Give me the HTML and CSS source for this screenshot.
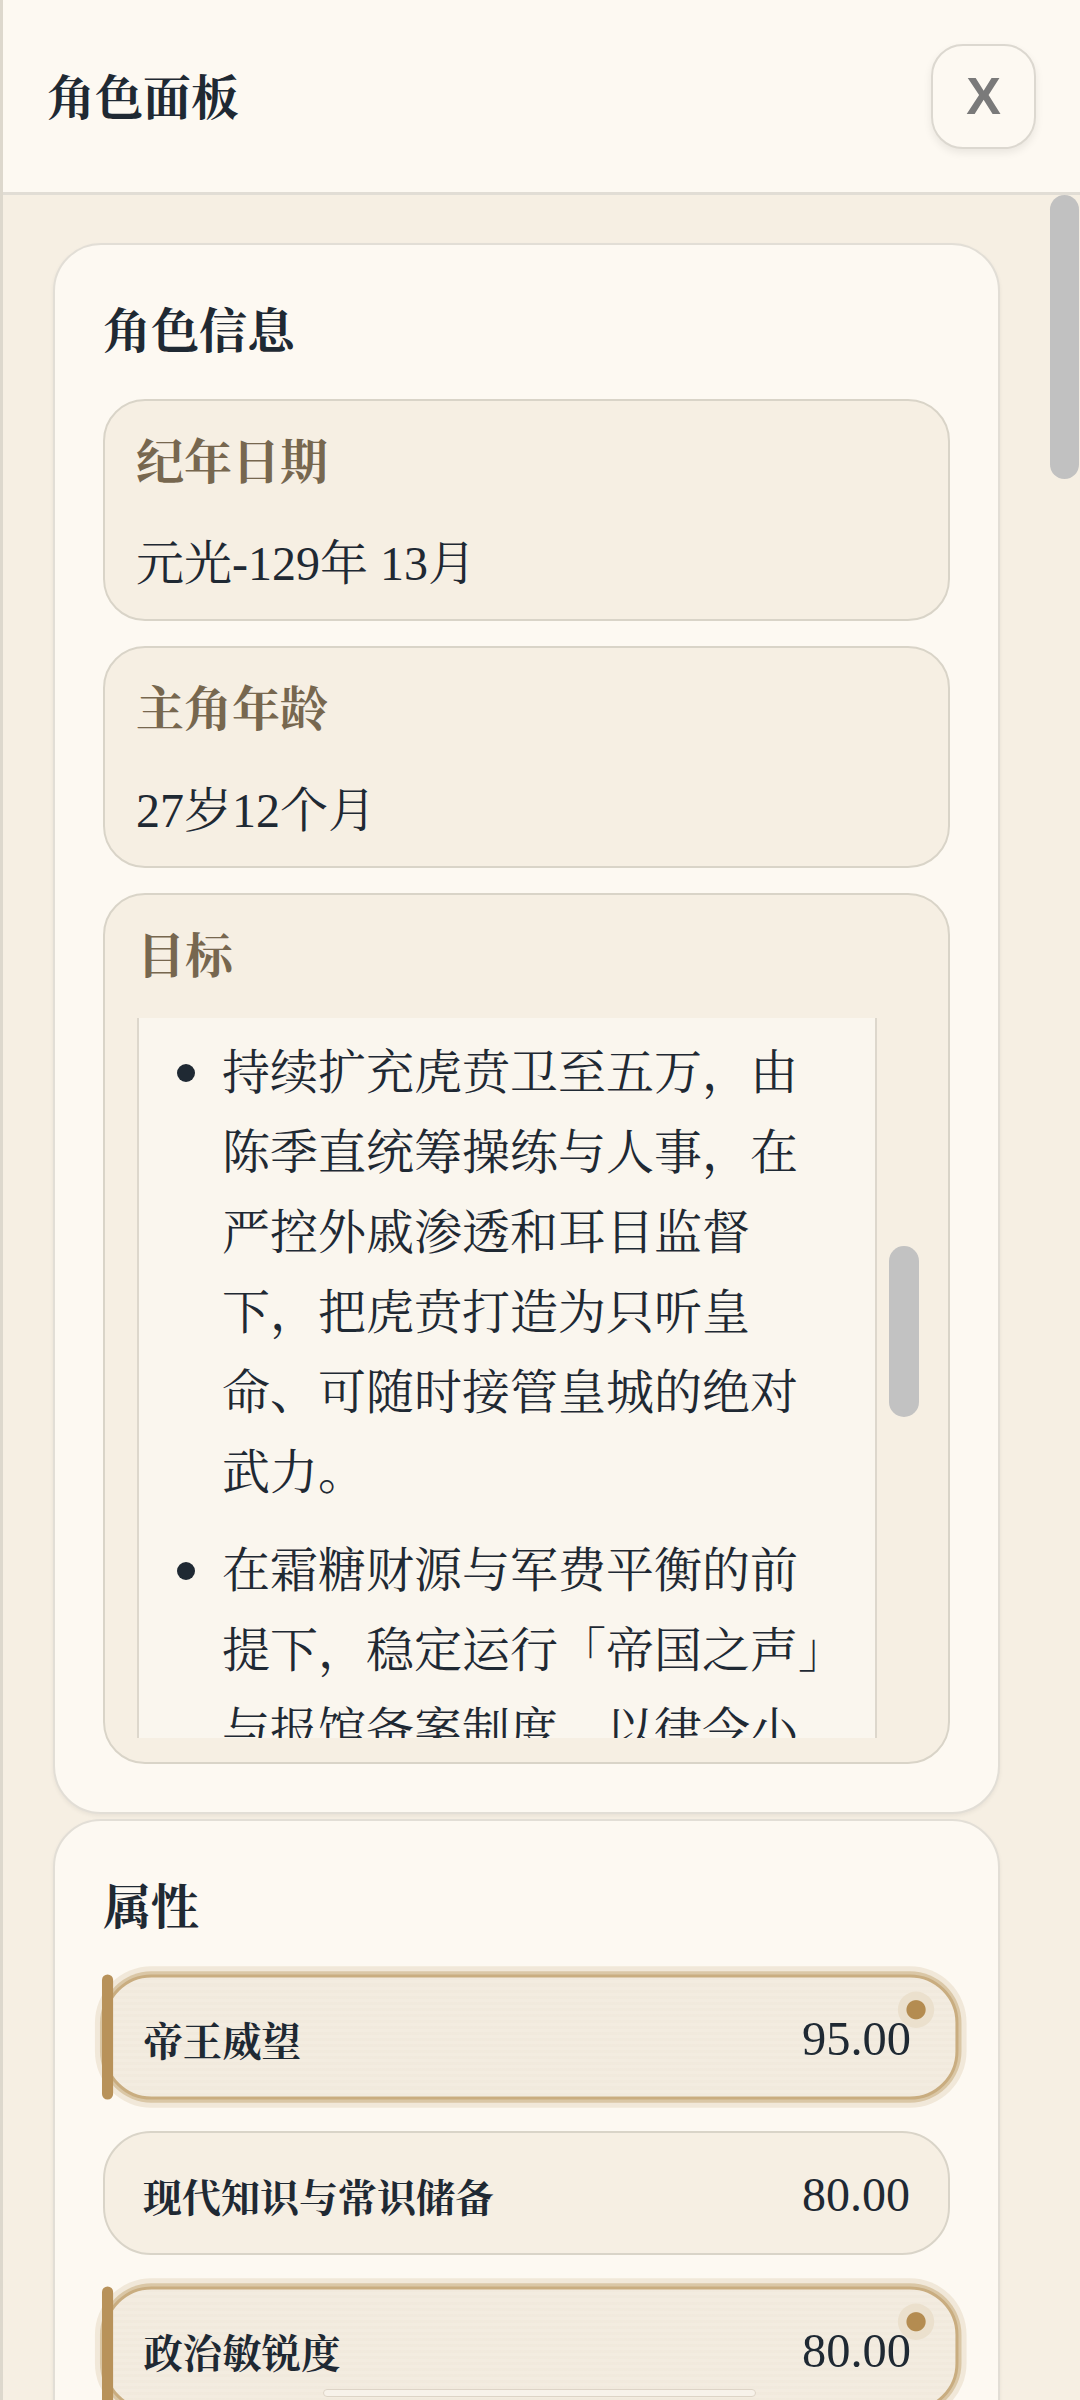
FILE: index.html
```html
<!DOCTYPE html>
<html lang="zh-CN">

<head>
    <meta charset="UTF-8">
    <meta name="viewport" content="width=device-width, initial-scale=1.0">
    <title>角色面板</title>
    <link rel="stylesheet" href="styles.css">
</head>

<body>
    <div class="panel">
        <!--标题栏-->
        <div class="panel-header">
            <h1 class="panel-title">角色面板</h1>
            <button type="button" class="close-btn">X</button>
        </div>
        <div class="panel-body">
            <div class="panel-scroll">
                <!--角色信息-->
                <div class="card">
                    <h2>角色信息</h2>
                    <div class="info-box">
                        <div class="info-label">纪年日期</div>
                        <div class="info-value">元光-129年 13月</div>
                    </div>
                    <div class="info-box">
                        <div class="info-label">主角年龄</div>
                        <div class="info-value">27岁12个月</div>
                    </div>
                    <div class="info-box goal-box">
                        <div class="info-label">目标</div>
                        <div class="goal-scroll">
                            <ul class="goal-list">
                                <li><span class="dot"></span><span>持续扩充虎贲卫至五万，由陈季直统筹操练与人事，在严控外戚渗透和耳目监督下，把虎贲打造为只听皇命、可随时接管皇城的绝对武力。</span></li>
                                <li><span class="dot"></span><span>在霜糖财源与军费平衡的前提下，稳定运行「帝国之声」与报馆备案制度，以律令小心收束舆论，使朝野议论尽在掌控之中。</span></li>
                            </ul>
                            <div class="goal-track">
                                <div class="goal-thumb"></div>
                            </div>
                        </div>
                    </div>
                </div>
                <!--属性-->
                <div class="card">
                    <h2>属性</h2>
                    <div class="attr-row active">
                        <span class="attr-name">帝王威望</span>
                        <span class="attr-value">95.00</span>
                    </div>
                    <div class="attr-row">
                        <span class="attr-name">现代知识与常识储备</span>
                        <span class="attr-value">80.00</span>
                    </div>
                    <div class="attr-row active">
                        <span class="attr-name">政治敏锐度</span>
                        <span class="attr-value">80.00</span>
                    </div>
                    <div class="attr-row">
                        <span class="attr-name">军事统御</span>
                        <span class="attr-value">75.00</span>
                    </div>
                </div>
            </div>
            <div class="scroll-track">
                <div class="scroll-thumb"></div>
            </div>
        </div>
    </div>
    <div class="nav-bar"></div>
</body>

</html>
```

FILE: styles.css
```css
body {
    margin: 0;
    padding: 0;
    font-family: "Liberation Serif", "Noto Serif CJK SC", "Noto Sans CJK SC", serif;
    background-color: #f6efe3;
    color: #1f2933;
}

.panel {
    height: 2400px;
    display: flex;
    flex-direction: column;
    border-left: 3px solid #ddd8cd;
    overflow: hidden;
}

.panel-header {
    height: 192px;
    flex-shrink: 0;
    padding: 0 44px;
    display: flex;
    justify-content: space-between;
    align-items: center;
    background-color: #fdf9f2;
    border-bottom: 3px solid #e1ddd5;
}

.panel-title {
    margin: 0;
    padding-top: 6px;
    font-size: 48px;
    line-height: 64px;
    font-weight: bold;
}

.close-btn {
    width: 105px;
    height: 105px;
    padding: 0;
    border: 2px solid #dcd8d0;
    border-radius: 32px;
    background-color: #fdf9f2;
    box-shadow: 0 4px 8px rgba(0, 0, 0, 0.08);
    font-family: "Liberation Sans", sans-serif;
    font-size: 52px;
    font-weight: bold;
    color: #7a7a7a;
    cursor: pointer;
}

.panel-body {
    flex: 1;
    display: flex;
    min-height: 0;
}

.panel-scroll {
    flex: 1;
    padding: 48px 50px 0;
    overflow: hidden;
}

.scroll-track {
    width: 30px;
    flex-shrink: 0;
}

.scroll-thumb {
    width: 29px;
    height: 284px;
    background-color: #c1c1c1;
    border-radius: 15px;
}

.card {
    background-color: #fdf9f2;
    border: 2px solid #e2ded6;
    border-radius: 48px;
    padding: 55px 48px 48px;
    margin-bottom: 5px;
    box-shadow: 0 2px 4px rgba(0, 0, 0, 0.06);
}

.card h2 {
    margin: 0 0 35px;
    font-size: 48px;
    line-height: 64px;
    font-weight: bold;
}

.info-box {
    background-color: #f6efe3;
    border: 2px solid #d9d4c8;
    border-radius: 42px;
    padding: 30px 30px 25px 31px;
    margin-bottom: 25px;
}

.info-box:last-child {
    margin-bottom: 0;
}

.info-label {
    font-size: 48px;
    line-height: 64px;
    font-weight: bold;
    color: #77674f;
}

.info-value {
    margin-top: 39px;
    font-size: 48px;
    line-height: 60px;
}

.goal-box {
    padding: 30px 26px 24px 32px;
}

.goal-box .info-label {
    margin-bottom: 29px;
}

.goal-scroll {
    display: flex;
    height: 720px;
}

.goal-list {
    flex: 1;
    margin: 0;
    padding: 15px 39px 0 38px;
    list-style: none;
    background-color: #faf6ee;
    border-left: 2px solid #ddd7cc;
    border-right: 2px solid #ddd7cc;
    overflow: hidden;
}

.goal-list li {
    display: flex;
    font-size: 48px;
    line-height: 80px;
    margin-bottom: 18px;
}

.dot {
    flex-shrink: 0;
    width: 18px;
    height: 18px;
    margin: 31px 27px 0 0;
    border-radius: 50%;
    background-color: #1f2933;
}

.goal-track {
    width: 45px;
    padding-left: 12px;
    box-sizing: border-box;
}

.goal-thumb {
    width: 30px;
    height: 171px;
    margin-top: 228px;
    background-color: #c2c2c2;
    border-radius: 15px;
}

.attr-row {
    position: relative;
    height: 124px;
    box-sizing: border-box;
    padding: 3px 38px 0;
    margin-bottom: 32px;
    display: flex;
    justify-content: space-between;
    align-items: center;
    background-color: #f6efe3;
    border: 2px solid #d9d4c8;
    border-radius: 48px;
}

.attr-name {
    font-size: 39px;
    font-weight: bold;
}

.attr-value {
    font-size: 48px;
}

.attr-row.active {
    padding: 3px 44px 0 37px;
    border: 3px solid #c9ad80;
    background: repeating-linear-gradient(180deg, rgba(120, 90, 40, 0.015) 0 3px, transparent 3px 6px), #f3ece0;
    box-shadow: 0 0 0 3px #dac7a6, 0 0 0 8px #f1e8d9;
    transform-origin: left center;
    transform: scale(1.01);
}

/* barre dorée à gauche */
.attr-row.active::before {
    content: "";
    position: absolute;
    left: -4px;
    top: -3px;
    bottom: -3px;
    width: 11px;
    border-radius: 6px;
    background-color: #b8925a;
}

/* pastille en haut à droite */
.attr-row.active::after {
    content: "";
    position: absolute;
    top: 14px;
    right: 21px;
    width: 36px;
    height: 36px;
    border-radius: 50%;
    background: radial-gradient(circle, #b48c51 0 9px, #ebe0cd 10px);
}

.nav-bar {
    position: fixed;
    left: 323px;
    bottom: 3px;
    width: 433px;
    height: 8px;
    box-sizing: border-box;
    background-color: #f7f2ea;
    border: 1px solid #ddd4c6;
    border-radius: 5px;
}
```
